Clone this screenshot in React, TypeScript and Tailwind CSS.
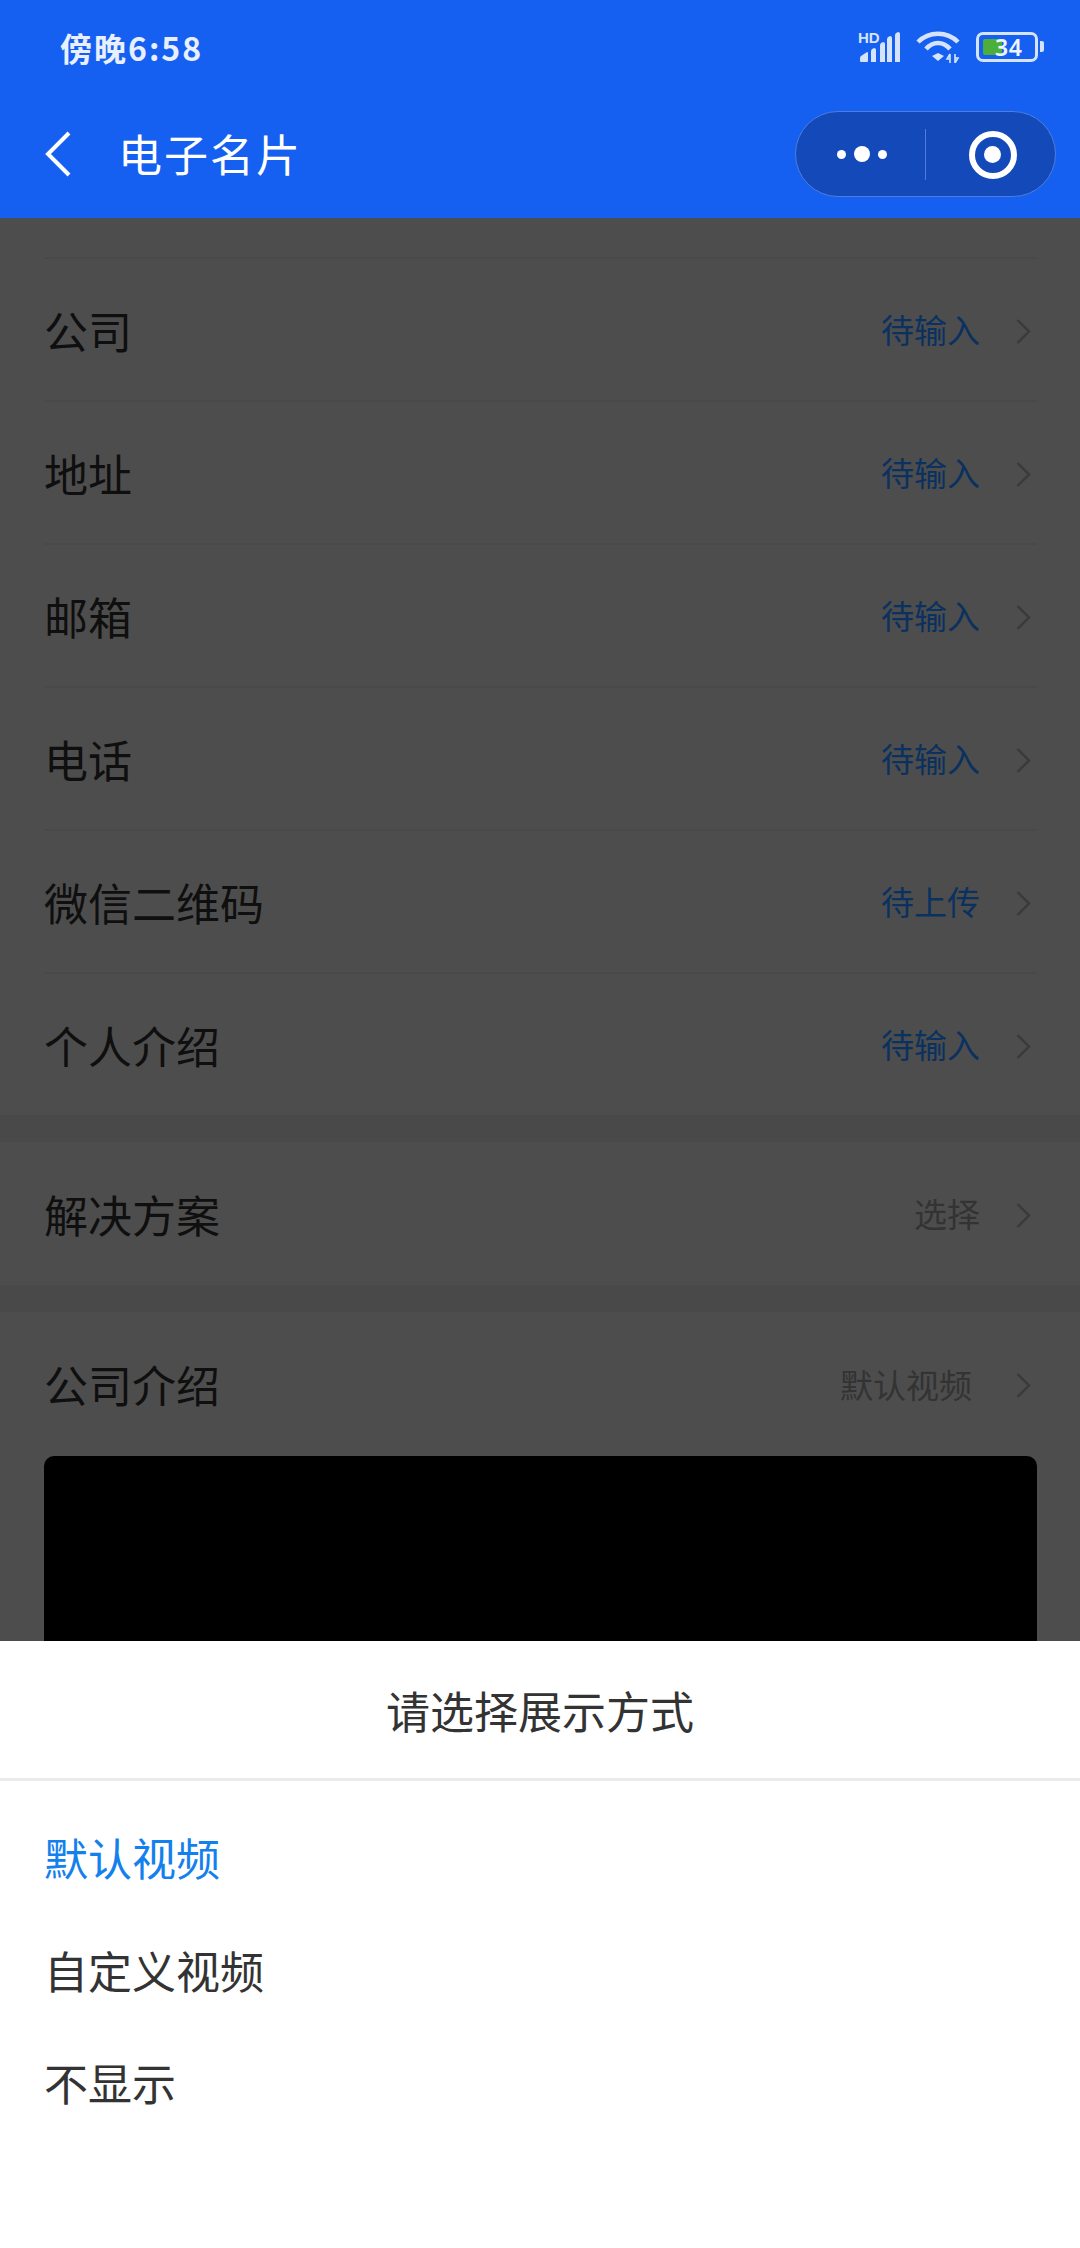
const font = { fontFamily: '"Noto Sans CJK SC", "Noto Sans", sans-serif' };

const Chevron = () => (
  <svg width="15" height="25" viewBox="0 0 15 25" fill="none" className="mt-[3px] shrink-0">
    <path d="M1.5 1 L13 12.5 L1.5 24" stroke="#3a3a3a" strokeWidth="2.4" />
  </svg>
);

const FormRow = ({
  label,
  value,
  valueClass,
  divider = true,
}: {
  label: string;
  value: string;
  valueClass: string;
  divider?: boolean;
}) => (
  <div className={`flex h-[143px] items-center ${divider ? "border-t-2 border-[#494949]" : ""}`}>
    <span className="flex-1 text-[44px] leading-none text-[#0f0f0f]">{label}</span>
    <span className={`mr-[36px] text-[33px] leading-none ${valueClass}`}>{value}</span>
    <div className="mr-[6px]">
      <Chevron />
    </div>
  </div>
);

const StatusIcons = () => (
  <div className="mb-[3px] flex items-center text-[#d5e3fd]">
    <div className="relative h-[30px] w-[42px]">
      <span
        className="absolute left-[-1px] top-[-2px] text-[15px] font-bold leading-none"
        style={{ fontFamily: '"Liberation Sans", sans-serif' }}
      >
        HD
      </span>
      <svg width="42" height="30" viewBox="0 0 42 30" fill="currentColor">
        <path d="M1 29 V26 Q1 25 2 24 L8 20 Q9 20 9 21 V29 Q9 30 8 30 H2 Q1 30 1 29 Z" />
        <path d="M12 30 V19 Q12 17 15 16 Q17 16 17 18 V30 Z" />
        <path d="M21 30 V13 Q21 11 24 10 Q26 10 26 12 V30 Z" />
        <path d="M28 30 V7 Q28 5 31 4 Q33 4 33 6 V30 Z" />
        <path d="M36 30 V3 Q36 1 39 0 Q41 0 41 2 V30 Z" />
      </svg>
    </div>
    <svg width="44" height="32" viewBox="0 0 44 32" fill="none" className="ml-[15px]" stroke="currentColor">
      <path d="M2 11 C13 0 31 0 42 11" strokeWidth="4.5" />
      <path d="M10 18 C17 10 27 10 34 18" strokeWidth="4.5" />
      <path d="M16 25 L22 22 L28 25 L22 30 Z" fill="currentColor" stroke="none" />
      <path d="M34 23 V32 M34 23 L31 28 H34 M39 23 V32 M39 32 L42 27 H39" strokeWidth="1.6" />
    </svg>
    <div className="relative ml-[16px] flex h-[30px] w-[62px] items-center rounded-[7px] border-[3px] border-current pl-[4px]">
      <div className="h-[16px] w-[19px] rounded-[2px] bg-[#4caf3c]" />
      <span
        className="absolute left-[16px] top-[0px] text-[23px] font-semibold leading-[24px] tracking-[0.5px] text-[#eef4ff]"
        style={{ fontFamily: '"Noto Sans", sans-serif' }}
      >
        34
      </span>
    </div>
    <div className="ml-[2px] h-[11px] w-[4px] rounded-r-[2px] bg-current" />
  </div>
);

const Capsule = () => (
  <div className="flex h-[86px] w-[261px] items-center rounded-[43px] border border-[#4f7dd8] bg-[#1349b8]">
    <div className="flex w-[129px] items-center justify-center gap-[8px] pl-[2px]">
      <span className="h-[9px] w-[9px] rounded-full bg-white" />
      <span className="h-[16px] w-[16px] rounded-full bg-white" />
      <span className="h-[9px] w-[9px] rounded-full bg-white" />
    </div>
    <div className="h-[51px] w-px bg-[#4f7dd8]" />
    <div className="flex flex-1 items-center justify-center pl-[4px] pt-[1px]">
      <div className="flex h-[48px] w-[48px] items-center justify-center rounded-full border-[6px] border-white">
        <span className="h-[17px] w-[17px] rounded-full bg-white" />
      </div>
    </div>
  </div>
);

export default function App() {
  return (
    <div className="relative h-[2248px] w-[1080px] overflow-hidden bg-[#4d4d4d]" style={font}>
      <header className="h-[218px] bg-[#1560f0]">
        <div className="flex h-[96px] items-center justify-between pl-[60px] pr-[36px]">
          <span className="mb-[3px] text-[32px] font-bold leading-none tracking-[2px] text-[#e8f0ff]">傍晚6:58</span>
          <StatusIcons />
        </div>
        <div className="flex h-[116px] items-center pl-[45px] pr-[24px]">
          <svg width="26" height="46" viewBox="0 0 26 46" fill="none" className="shrink-0">
            <path d="M24 2 L3 23 L24 44" stroke="white" strokeWidth="4" />
          </svg>
          <h1 className="mb-[2px] ml-[47px] flex-1 text-[44px] leading-none tracking-[2px] text-white">电子名片</h1>
          <Capsule />
        </div>
      </header>

      <main>
        <div className="h-[39px]" />
        <section className="ml-[44px] mr-[43px]">
          <FormRow label="公司" value="待输入" valueClass="text-[#0a315f]" />
          <FormRow label="地址" value="待输入" valueClass="text-[#0a315f]" />
          <FormRow label="邮箱" value="待输入" valueClass="text-[#0a315f]" />
          <FormRow label="电话" value="待输入" valueClass="text-[#0a315f]" />
          <FormRow label="微信二维码" value="待上传" valueClass="text-[#0a315f]" />
          <FormRow label="个人介绍" value="待输入" valueClass="text-[#0a315f]" />
        </section>
        <div className="h-[27px] bg-[#494949]" />
        <section className="ml-[44px] mr-[43px]">
          <FormRow label="解决方案" value="选择" valueClass="text-[#333333]" divider={false} />
        </section>
        <div className="h-[27px] bg-[#494949]" />
        <section className="ml-[44px] mr-[43px]">
          <div className="flex h-[144px] items-center">
            <span className="flex-1 text-[44px] leading-none text-[#0f0f0f]">公司介绍</span>
            <span className="mr-[44px] text-[33px] leading-none text-[#333333]">默认视频</span>
            <div className="mr-[6px]">
              <Chevron />
            </div>
          </div>
          <div className="h-[400px] rounded-[10px] bg-black" />
        </section>
      </main>

      <div className="absolute inset-x-0 bottom-0 h-[607px] bg-white">
        <div className="flex h-[137px] items-center justify-center text-[44px] leading-none text-[#333333]">
          请选择展示方式
        </div>
        <div className="h-[3px] bg-[#ebebeb]" />
        <ul className="pt-[19px] text-[44px] leading-none text-[#333333]">
          <li className="flex h-[113px] items-center pl-[44px] text-[#1380ee]">默认视频</li>
          <li className="flex h-[113px] items-center pl-[44px]">自定义视频</li>
          <li className="flex h-[112px] items-center pl-[44px]">不显示</li>
        </ul>
      </div>
    </div>
  );
}
